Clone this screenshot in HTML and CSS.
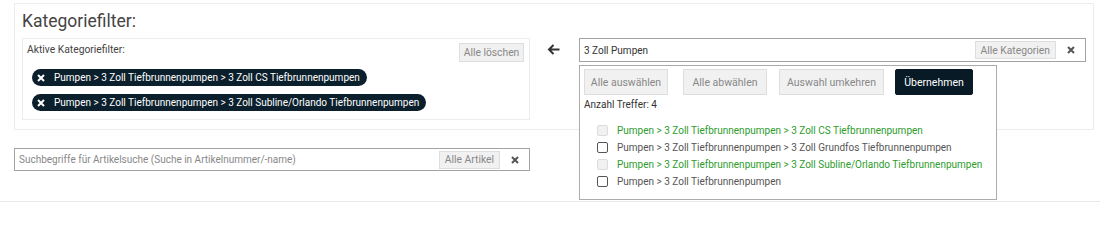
FILE: index.html
```html
<!DOCTYPE html>
<html lang="de">
<head>
<meta charset="utf-8">
<title>Kategoriefilter</title>
<link rel="stylesheet" href="styles.css">
</head>
<body>
<div class="panel">
  <div class="title">Kategoriefilter:</div>
  <div class="row">
    <div class="active-box">
      <div class="active-head">
        <span class="label">Aktive Kategoriefilter:</span>
        <span class="btn-light btn-clear-all">Alle löschen</span>
      </div>
      <div class="chips">
        <span class="chip"><svg class="x-icon" viewBox="0 0 8 8"><path d="M1 1L7 7M7 1L1 7"/></svg>Pumpen &gt; 3 Zoll Tiefbrunnenpumpen &gt; 3 Zoll CS Tiefbrunnenpumpen</span>
        <span class="chip"><svg class="x-icon" viewBox="0 0 8 8"><path d="M1 1L7 7M7 1L1 7"/></svg>Pumpen &gt; 3 Zoll Tiefbrunnenpumpen &gt; 3 Zoll Subline/Orlando Tiefbrunnenpumpen</span>
      </div>
    </div>
    <div class="back">
      <svg class="arrow" viewBox="0 0 13 11"><path d="M12.5 5.5H2M6.5 1L2 5.5L6.5 10"/></svg>
    </div>
    <div class="cat-search">
      <div class="input-box">
        <span class="value">3 Zoll Pumpen</span>
        <span class="btn-light tag">Alle Kategorien</span>
        <svg class="clear" viewBox="0 0 8 8"><path d="M1 1L7 7M7 1L1 7"/></svg>
      </div>
      <div class="dropdown">
        <div class="actions">
          <span class="btn-light btn-big">Alle auswählen</span>
          <span class="btn-light btn-big">Alle abwählen</span>
          <span class="btn-light btn-big">Auswahl umkehren</span>
          <span class="btn-dark btn-big">Übernehmen</span>
        </div>
        <div class="count">Anzahl Treffer: 4</div>
        <ul class="list">
          <li class="item selected"><span class="cb"></span>Pumpen &gt; 3 Zoll Tiefbrunnenpumpen &gt; 3 Zoll CS Tiefbrunnenpumpen</li>
          <li class="item"><span class="cb"></span>Pumpen &gt; 3 Zoll Tiefbrunnenpumpen &gt; 3 Zoll Grundfos Tiefbrunnenpumpen</li>
          <li class="item selected"><span class="cb"></span>Pumpen &gt; 3 Zoll Tiefbrunnenpumpen &gt; 3 Zoll Subline/Orlando Tiefbrunnenpumpen</li>
          <li class="item"><span class="cb"></span>Pumpen &gt; 3 Zoll Tiefbrunnenpumpen</li>
        </ul>
      </div>
    </div>
  </div>
</div>
<div class="article-search">
  <span class="placeholder">Suchbegriffe für Artikelsuche (Suche in Artikelnummer/-name)</span>
  <span class="btn-light tag">Alle Artikel</span>
  <svg class="clear" viewBox="0 0 8 8"><path d="M1 1L7 7M7 1L1 7"/></svg>
</div>
<div class="divider"></div>
</body>
</html>
```
FILE: styles.css
```css
* { box-sizing: border-box; }
html, body { margin: 0; padding: 0; background: #fff; }
body {
  font-family: Roboto, "Liberation Sans", Arial, sans-serif;
  font-size: 10px;
  color: #333;
  width: 1100px;
  height: 221px;
  overflow: hidden;
}
.panel {
  margin: 3px 6px 0 14px;
  height: 127px;
  border: 1px solid #ececec;
  padding: 7px 7px 0 7px;
}
.title {
  font-size: 17.5px;
  line-height: 20px;
  color: #444;
  margin-bottom: 7px;
}
.row {
  display: flex;
  align-items: flex-start;
}
.active-box {
  width: 508px;
  height: 82px;
  border: 1px solid #ececec;
  padding: 4px 5px 0 4px;
}
.active-head {
  display: flex;
  justify-content: space-between;
  align-items: flex-start;
}
.label {
  line-height: 14px;
  color: #444;
  font-size: 10.3px;
}
.btn-light {
  background: #f1f1f1;
  border: 1px solid #dedede;
  color: #888;
  font-size: 10.3px;
  display: inline-flex;
  align-items: center;
  justify-content: center;
  white-space: nowrap;
}
.btn-clear-all {
  width: 65px;
  height: 19px;
}
.chips {
  display: flex;
  flex-direction: column;
  align-items: flex-start;
  gap: 8px;
  margin: 7px 0 0 5px;
}
.chip {
  display: inline-flex;
  align-items: center;
  height: 17px;
  border-radius: 9px;
  background: #0c1f2c;
  color: #fff;
  padding: 0 7px 0 5px;
  white-space: nowrap;
}
.x-icon {
  width: 8px;
  height: 8px;
  margin-right: 9px;
  fill: none;
  stroke: #fff;
  stroke-width: 2;
}
.back {
  width: 49px;
  padding: 6px 0 0 17px;
}
.arrow {
  display: block;
  width: 13px;
  height: 11px;
  fill: none;
  stroke: #333;
  stroke-width: 2;
}
.cat-search {
  flex: 1;
  position: relative;
}
.input-box, .article-search {
  display: flex;
  align-items: center;
  border: 1px solid #a3a3a3;
  background: #fff;
}
.input-box {
  height: 24px;
  padding: 0 10px 0 4px;
}
.value { color: #333; }
.tag {
  margin-left: auto;
  height: 18px;
  padding: 0 5px;
}
.clear {
  width: 8px;
  height: 8px;
  margin-left: 11px;
  fill: none;
  stroke: #555;
  stroke-width: 2;
}
.dropdown {
  position: absolute;
  top: 27px;
  left: 0;
  width: 418px;
  height: 135px;
  border: 1px solid #ababab;
  background: #fff;
  padding: 3px 5px 0 4px;
  z-index: 5;
}
.actions {
  display: flex;
}
.btn-big {
  height: 26px;
  font-size: 10.5px;
}
.actions .btn-big:nth-child(1) { width: 84px; margin-right: 15px; }
.actions .btn-big:nth-child(2) { width: 84px; margin-right: 12px; }
.actions .btn-big:nth-child(3) { width: 105px; margin-right: 11px; }
.actions .btn-big:nth-child(4) { width: 78px; }
.btn-dark {
  display: inline-flex;
  align-items: center;
  justify-content: center;
  background: #071a26;
  border: 1px solid #071a26;
  color: #fff;
  border-radius: 2px;
}
.count {
  margin-top: 2px;
  line-height: 16px;
  color: #333;
}
.list {
  list-style: none;
  margin: 9px 0 0 0;
  padding: 0 0 0 13px;
}
.item {
  display: flex;
  align-items: center;
  height: 17px;
  color: #555;
  white-space: nowrap;
}
.cb {
  width: 11px;
  height: 11px;
  border: 1px solid #555;
  border-radius: 2px;
  background: #fff;
  margin-right: 9px;
  flex: none;
}
.item.selected { color: #2c9c2c; }
.item.selected .cb {
  border-color: #dcdcdc;
  background: #f1f1f1;
}
.article-search {
  margin: 18px 0 0 14px;
  width: 516px;
  height: 23px;
  padding: 0 10px 0 4px;
}
.placeholder { color: #888; }
.divider {
  margin-top: 30px;
  border-top: 1px solid #e8e8e8;
}
```
